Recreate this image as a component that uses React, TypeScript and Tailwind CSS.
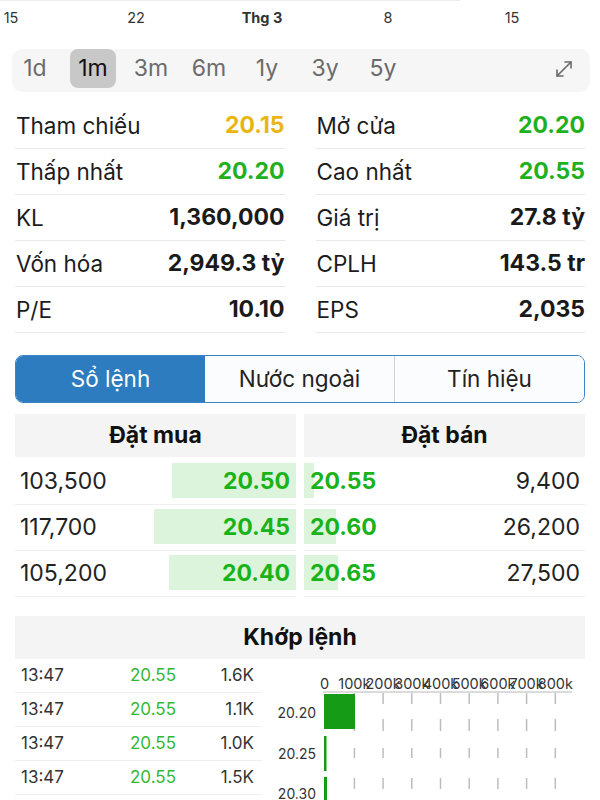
import { MoveDiagonal } from "lucide-react";

const stats = [
  { l: "Tham chiếu", v: "20.15", c: "text-[#e9b611]", l2: "Mở cửa", v2: "20.20", c2: "text-[#1fb01f]" },
  { l: "Thấp nhất", v: "20.20", c: "text-[#1fb01f]", l2: "Cao nhất", v2: "20.55", c2: "text-[#1fb01f]" },
  { l: "KL", v: "1,360,000", c: "text-[#1a1a1a]", l2: "Giá trị", v2: "27.8 tỷ", c2: "text-[#1a1a1a]" },
  { l: "Vốn hóa", v: "2,949.3 tỷ", c: "text-[#1a1a1a]", l2: "CPLH", v2: "143.5 tr", c2: "text-[#1a1a1a]" },
  { l: "P/E", v: "10.10", c: "text-[#1a1a1a]", l2: "EPS", v2: "2,035", c2: "text-[#1a1a1a]" },
];

const orders = [
  { bq: "103,500", bp: "20.50", bw: 124, sp: "20.55", sq: "9,400", sw: 10 },
  { bq: "117,700", bp: "20.45", bw: 142, sp: "20.60", sq: "26,200", sw: 32 },
  { bq: "105,200", bp: "20.40", bw: 127, sp: "20.65", sq: "27,500", sw: 34 },
];

const trades = [
  { t: "13:47", p: "20.55", v: "1.6K" },
  { t: "13:47", p: "20.55", v: "1.1K" },
  { t: "13:47", p: "20.55", v: "1.0K" },
  { t: "13:47", p: "20.55", v: "1.5K" },
];

const ranges = ["1d", "1m", "3m", "6m", "1y", "3y", "5y"];

const DateAxis = () => (
  <svg width="600" height="36" className="block">
    <line x1="0" y1="0.5" x2="460" y2="0.5" stroke="#eeeeee" />
    <g fontSize="14.5" fill="#333" textAnchor="middle" fontFamily="Inter, sans-serif">
      <text x="11" y="23">15</text>
      <text x="136" y="23">22</text>
      <text x="262" y="23" fontWeight="700">Thg 3</text>
      <text x="388" y="23">8</text>
      <text x="512" y="23">15</text>
    </g>
  </svg>
);

const VolumeChart = () => {
  const ticks = ["0", "100k", "200k", "300k", "400k", "500k", "600k", "700k", "800k"];
  const gx = (i: number) => 63.7 + i * 28.7;
  const dashes = [
    [34, 45],
    [60, 72],
    [89, 99],
    [119, 130],
  ];
  return (
    <svg width="323" height="142" className="block shrink-0">
      <g fontSize="14.5" fill="#333" textAnchor="middle" fontFamily="Inter, sans-serif">
        {ticks.map((t, i) => (
          <text key={t} x={i === 0 ? gx(0) - 1 : gx(i)} y="30">
            {t}
          </text>
        ))}
      </g>
      <line x1="61" y1="33" x2="310" y2="33" stroke="#cfcfcf" strokeWidth="1.5" />
      {ticks.slice(1).map((t, i) =>
        dashes.map(([a, b]) => (
          <line key={t + a} x1={gx(i + 1)} y1={a} x2={gx(i + 1)} y2={b} stroke="#bdbdbd" strokeWidth="1.5" />
        ))
      )}
      <rect x="62" y="35" width="31" height="35" fill="#169b16" />
      <rect x="62" y="77" width="2.5" height="35" fill="#169b16" />
      <rect x="62" y="118" width="3" height="35" fill="#169b16" />
      <g fontSize="14" fill="#333" textAnchor="end" fontFamily="Inter, sans-serif">
        <text x="54" y="59">20.20</text>
        <text x="54" y="100">20.25</text>
        <text x="54" y="140">20.30</text>
      </g>
    </svg>
  );
};

export default function App() {
  return (
    <div className="w-[600px] h-[800px] overflow-hidden bg-white font-['Inter',sans-serif] text-[#1c1c1e]">
      <DateAxis />

      {/* Range selector */}
      <div className="mt-[13px] ml-[12px] mr-[10px] h-[43px] flex items-start justify-between rounded-[10px] bg-[#f6f6f6]">
        <div className="flex gap-[12px]">
          {ranges.map((r) => (
            <div
              key={r}
              className={`w-[46px] h-[39px] flex items-center justify-center rounded-[8px] text-[23px] ${
                r === "1m" ? "bg-[#c8c8c8] text-[#111]" : "text-[#6b6b6b]"
              }`}
            >
              {r}
            </div>
          ))}
        </div>
        <div className="h-[39px] flex items-center pr-[14px]">
          <MoveDiagonal size={24} strokeWidth={1.6} className="text-[#6b6b6b]" />
        </div>
      </div>

      {/* Stats */}
      <div className="mt-[11px] px-[15px] grid grid-cols-2 gap-x-[31px]">
        {stats.map((s) => (
          <div key={s.l} className="contents">
            <div className="h-[46px] flex items-center justify-between border-b border-[#e9e9e9] text-[22.5px]">
              <span className="pl-[1px]">{s.l}</span>
              <span className={`text-[23px] font-bold ${s.c}`}>{s.v}</span>
            </div>
            <div className="h-[46px] flex items-center justify-between border-b border-[#e9e9e9] text-[22.5px]">
              <span className="pl-[1px]">{s.l2}</span>
              <span className={`text-[23px] font-bold ${s.c2}`}>{s.v2}</span>
            </div>
          </div>
        ))}
      </div>

      {/* Tabs */}
      <div className="mt-[22px] mx-[15px] h-[48px] flex rounded-[8px] border border-[#3a84c5] overflow-hidden text-[22.5px]">
        <div className="flex-1 flex items-center justify-center bg-[#2d7cc0] text-white">Sổ lệnh</div>
        <div className="flex-1 flex items-center justify-center bg-[#fbfcfd] text-[#222]">Nước ngoài</div>
        <div className="flex-1 flex items-center justify-center bg-[#fbfcfd] text-[#222] border-l border-[#c9d1d9]">
          Tín hiệu
        </div>
      </div>

      {/* Order book */}
      <div className="mt-[11px] px-[15px] grid grid-cols-2 gap-x-[8px]">
        <div className="h-[43px] flex items-center justify-center bg-[#f4f4f4] text-[23px] font-bold text-[#111]">Đặt mua</div>
        <div className="h-[43px] flex items-center justify-center bg-[#f4f4f4] text-[23px] font-bold text-[#111]">Đặt bán</div>
        <div className="mt-[2px]">
          {orders.map((o) => (
            <div key={o.bq} className="relative h-[46px] flex items-center justify-between border-b border-[#efefef] text-[23px]">
              <div className="absolute right-0 top-[4px] bottom-[6px] bg-[#dcf3dc]" style={{ width: o.bw }} />
              <span className="relative pl-[5px] text-[#222]">{o.bq}</span>
              <span className="relative pr-[6px] font-bold text-[#19b319]">{o.bp}</span>
            </div>
          ))}
        </div>
        <div className="mt-[2px]">
          {orders.map((o) => (
            <div key={o.sq} className="relative h-[46px] flex items-center justify-between border-b border-[#efefef] text-[23px]">
              <div className="absolute left-0 top-[4px] bottom-[6px] bg-[#dcf3dc]" style={{ width: o.sw }} />
              <span className="relative pl-[6px] font-bold text-[#19b319]">{o.sp}</span>
              <span className="relative pr-[5px] text-[#222]">{o.sq}</span>
            </div>
          ))}
        </div>
      </div>

      {/* Matched orders */}
      <div className="mt-[19px] mx-[15px] h-[43px] flex items-center justify-center bg-[#f4f4f4] text-[23px] font-bold text-[#111]">
        Khớp lệnh
      </div>
      <div className="flex pl-[15px]">
        <div className="w-[247px] shrink-0">
          {trades.map((t, i) => (
            <div key={i} className="h-[34px] flex items-center border-b border-[#efefef] text-[17px]">
              <span className="w-[115px] pl-[6px] text-[#333]">{t.t}</span>
              <span className="flex-1 text-[#33b833]">{t.p}</span>
              <span className="pr-[8px] text-[#333]">{t.v}</span>
            </div>
          ))}
        </div>
        <VolumeChart />
      </div>
    </div>
  );
}
